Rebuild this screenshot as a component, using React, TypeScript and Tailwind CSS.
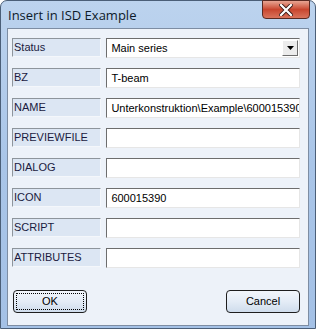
import React from "react";

const rows: { label: string; value: string; combo?: boolean }[] = [
  { label: "Status", value: "Main series", combo: true },
  { label: "BZ", value: "T-beam" },
  { label: "NAME", value: "Unterkonstruktion\\Example\\600015390" },
  { label: "PREVIEWFILE", value: "" },
  { label: "DIALOG", value: "" },
  { label: "ICON", value: "600015390" },
  { label: "SCRIPT", value: "" },
  { label: "ATTRIBUTES", value: "" },
];

function Row({ label, value, combo }: { label: string; value: string; combo?: boolean }) {
  return (
    <div className="flex h-[20px] gap-[5px]">
      <div className="flex h-[19px] w-[90px] items-center border-t border-l border-t-[#8e959c] border-l-[#8e959c] border-b border-r border-b-[#f4f7fb] border-r-[#f4f7fb] bg-[#dce6f3] pl-[1px] text-[11px] leading-none text-[#1a1a40]">
        {label}
      </div>
      <div className="relative flex h-[20px] w-[195px] items-center overflow-hidden whitespace-nowrap border-t border-l border-t-[#6d6d6d] border-l-[#6d6d6d] border-b border-r border-b-[#e6e6e6] border-r-[#e6e6e6] bg-white pl-[4px] text-[11px] leading-none text-black">
        {value}
        {combo && (
          <div className="absolute right-[1px] top-[1px] flex h-[16px] w-[16px] items-center justify-center border border-t-white border-l-white border-b-[#6d6d6d] border-r-[#6d6d6d] bg-[#ececec]">
            <svg width="7" height="4" viewBox="0 0 7 4">
              <path d="M0 0 H7 L3.5 4 Z" fill="#000" />
            </svg>
          </div>
        )}
      </div>
    </div>
  );
}

function Btn({ children, focus }: { children: React.ReactNode; focus?: boolean }) {
  return (
    <div className="flex h-[23px] w-[74px] items-center justify-center rounded-[4px] border border-[#1e1e1e] bg-gradient-to-b from-[#f2f6fb] via-[#e4ecf6] to-[#cfdcec] p-[2px]">
      <div
        className={
          "flex h-full w-full items-center justify-center text-[11px] leading-none text-black " +
          (focus ? "border border-dotted border-black" : "")
        }
      >
        {children}
      </div>
    </div>
  );
}

export default function App() {
  return (
    <div
      className="flex h-[329px] w-[316px] flex-col rounded-t-[7px] border border-[#4b5f78] bg-gradient-to-b from-[#bcd3ee] via-[#a9c5e8] to-[#a4c1e6]"
      style={{ fontFamily: "Tahoma, 'Liberation Sans', Arial, sans-serif" }}
    >
      <div className="flex h-[27px] items-start">
        <div
          className="pl-[7px] pt-[8px] text-[13px] leading-none text-[#0d1a2a]"
          style={{ fontFamily: "'Open Sans', 'Noto Sans', sans-serif" }}
        >
          Insert in ISD Example
        </div>
        <div className="ml-auto mr-[5px] mt-[-1px] flex h-[19px] w-[48px] items-center justify-center rounded-b-[4px] border border-[#5a2a22] bg-gradient-to-b from-[#e7a493] via-[#c8452e] to-[#d9735c]">
          <svg width="14" height="12" viewBox="0 0 14 12">
            <path d="M2 1 L12 11 M12 1 L2 11" stroke="#3a1a16" strokeWidth="4" strokeLinecap="square" />
            <path d="M2 1 L12 11 M12 1 L2 11" stroke="#ffffff" strokeWidth="2.2" strokeLinecap="square" />
          </svg>
        </div>
      </div>
      <div className="mb-[2px] ml-[6px] mr-[6px] flex flex-1 flex-col border border-[#7d8da3] bg-[#edf2f9] pl-[4px] pr-[8px] pt-[9px]">
        <div className="flex flex-col gap-[10px]">
          {rows.map((r) => (
            <Row key={r.label} {...r} />
          ))}
        </div>
        <div className="mt-[22px] flex justify-between pl-[1px]">
          <Btn focus>OK</Btn>
          <Btn>Cancel</Btn>
        </div>
      </div>
    </div>
  );
}
